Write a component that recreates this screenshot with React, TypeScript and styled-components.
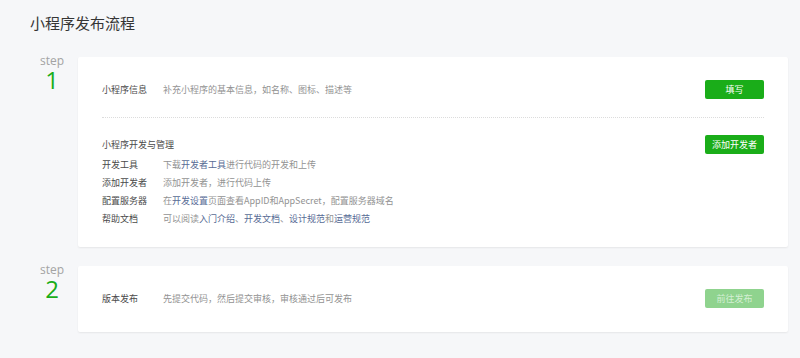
import React from "react";
import styled, { createGlobalStyle } from "styled-components";

const GlobalStyle = createGlobalStyle`
  html, body { margin: 0; padding: 0; background: #f6f7f9; }
  body { font-family: "Noto Sans CJK SC", "Noto Sans", sans-serif; }
  * { box-sizing: border-box; }
`;

const Page = styled.div`
  width: 800px;
  height: 358px;
  padding: 13px 12px 0 30px;
  background: #f6f7f9;
  overflow: hidden;
`;

const Title = styled.h1`
  margin: 0;
  font-size: 15px;
  line-height: 20px;
  font-weight: normal;
  color: #353535;
`;

const StepBlock = styled.div<{ $top: number }>`
  display: flex;
  margin-top: ${(p) => p.$top}px;
`;

const StepMark = styled.div`
  width: 48px;
  flex: none;
  display: flex;
  flex-direction: column;
  align-items: center;
  padding-right: 4px;
  margin-top: -3px;
  font-family: "Open Sans", "Noto Sans", sans-serif;
`;

const StepWord = styled.span`
  font-size: 12px;
  line-height: 14px;
  color: #a3a3a3;
`;

const StepNum = styled.span`
  font-size: 24px;
  line-height: 24px;
  color: #1aad19;
`;

const Card = styled.div`
  flex: 1;
  background: #fff;
  border-radius: 2px;
  box-shadow: 0 1px 2px rgba(0, 0, 0, 0.07);
  padding: 0 24px;
`;

const Section = styled.div<{ $pt: number; $pb: number; $dotted?: boolean }>`
  padding: ${(p) => p.$pt}px 0 ${(p) => p.$pb}px;
  border-bottom: ${(p) => (p.$dotted ? "1px dotted #dcdcdc" : "none")};
`;

const HeadRow = styled.div`
  display: flex;
  align-items: center;
  height: 19px;
  font-size: 9px;
`;

const Label = styled.span`
  width: 61px;
  flex: none;
  color: #4a4a4a;
`;

const SectionTitle = styled.span`
  flex: 1;
  color: #4a4a4a;
`;

const Desc = styled.span`
  flex: 1;
  color: #929292;
`;

const Link = styled.a`
  color: #576b95;
  text-decoration: none;
`;

const Button = styled.button<{ $disabled?: boolean }>`
  width: 59px;
  height: 19px;
  flex: none;
  border: none;
  border-radius: 2px;
  background: ${(p) => (p.$disabled ? "#8fd38e" : "#1aad19")};
  color: ${(p) => (p.$disabled ? "#d4efd4" : "#fff")};
  font-family: inherit;
  font-size: 9px;
  padding: 0;
  cursor: pointer;
`;

const List = styled.div`
  display: flex;
  flex-direction: column;
  margin-top: 1px;
`;

const ListRow = styled.div`
  display: flex;
  align-items: center;
  height: 18px;
  font-size: 9px;
`;

export default function App() {
  return (
    <>
      <GlobalStyle />
      <Page>
        <Title>小程序发布流程</Title>
        <StepBlock $top={24}>
          <StepMark>
            <StepWord>step</StepWord>
            <StepNum>1</StepNum>
          </StepMark>
          <Card>
            <Section $pt={23} $pb={18} $dotted>
              <HeadRow>
                <Label>小程序信息</Label>
                <Desc>补充小程序的基本信息，如名称、图标、描述等</Desc>
                <Button>填写</Button>
              </HeadRow>
            </Section>
            <Section $pt={17} $pb={20}>
              <HeadRow>
                <SectionTitle>小程序开发与管理</SectionTitle>
                <Button>添加开发者</Button>
              </HeadRow>
              <List>
                <ListRow>
                  <Label>开发工具</Label>
                  <Desc>
                    下载<Link>开发者工具</Link>进行代码的开发和上传
                  </Desc>
                </ListRow>
                <ListRow>
                  <Label>添加开发者</Label>
                  <Desc>添加开发者，进行代码上传</Desc>
                </ListRow>
                <ListRow>
                  <Label>配置服务器</Label>
                  <Desc>
                    在<Link>开发设置</Link>页面查看AppID和AppSecret，配置服务器域名
                  </Desc>
                </ListRow>
                <ListRow>
                  <Label>帮助文档</Label>
                  <Desc>
                    可以阅读<Link>入门介绍</Link>、<Link>开发文档</Link>、<Link>设计规范</Link>和
                    <Link>运营规范</Link>
                  </Desc>
                </ListRow>
              </List>
            </Section>
          </Card>
        </StepBlock>
        <StepBlock $top={19}>
          <StepMark>
            <StepWord>step</StepWord>
            <StepNum>2</StepNum>
          </StepMark>
          <Card>
            <Section $pt={23} $pb={24}>
              <HeadRow>
                <Label>版本发布</Label>
                <Desc>先提交代码，然后提交审核，审核通过后可发布</Desc>
                <Button $disabled>前往发布</Button>
              </HeadRow>
            </Section>
          </Card>
        </StepBlock>
      </Page>
    </>
  );
}
